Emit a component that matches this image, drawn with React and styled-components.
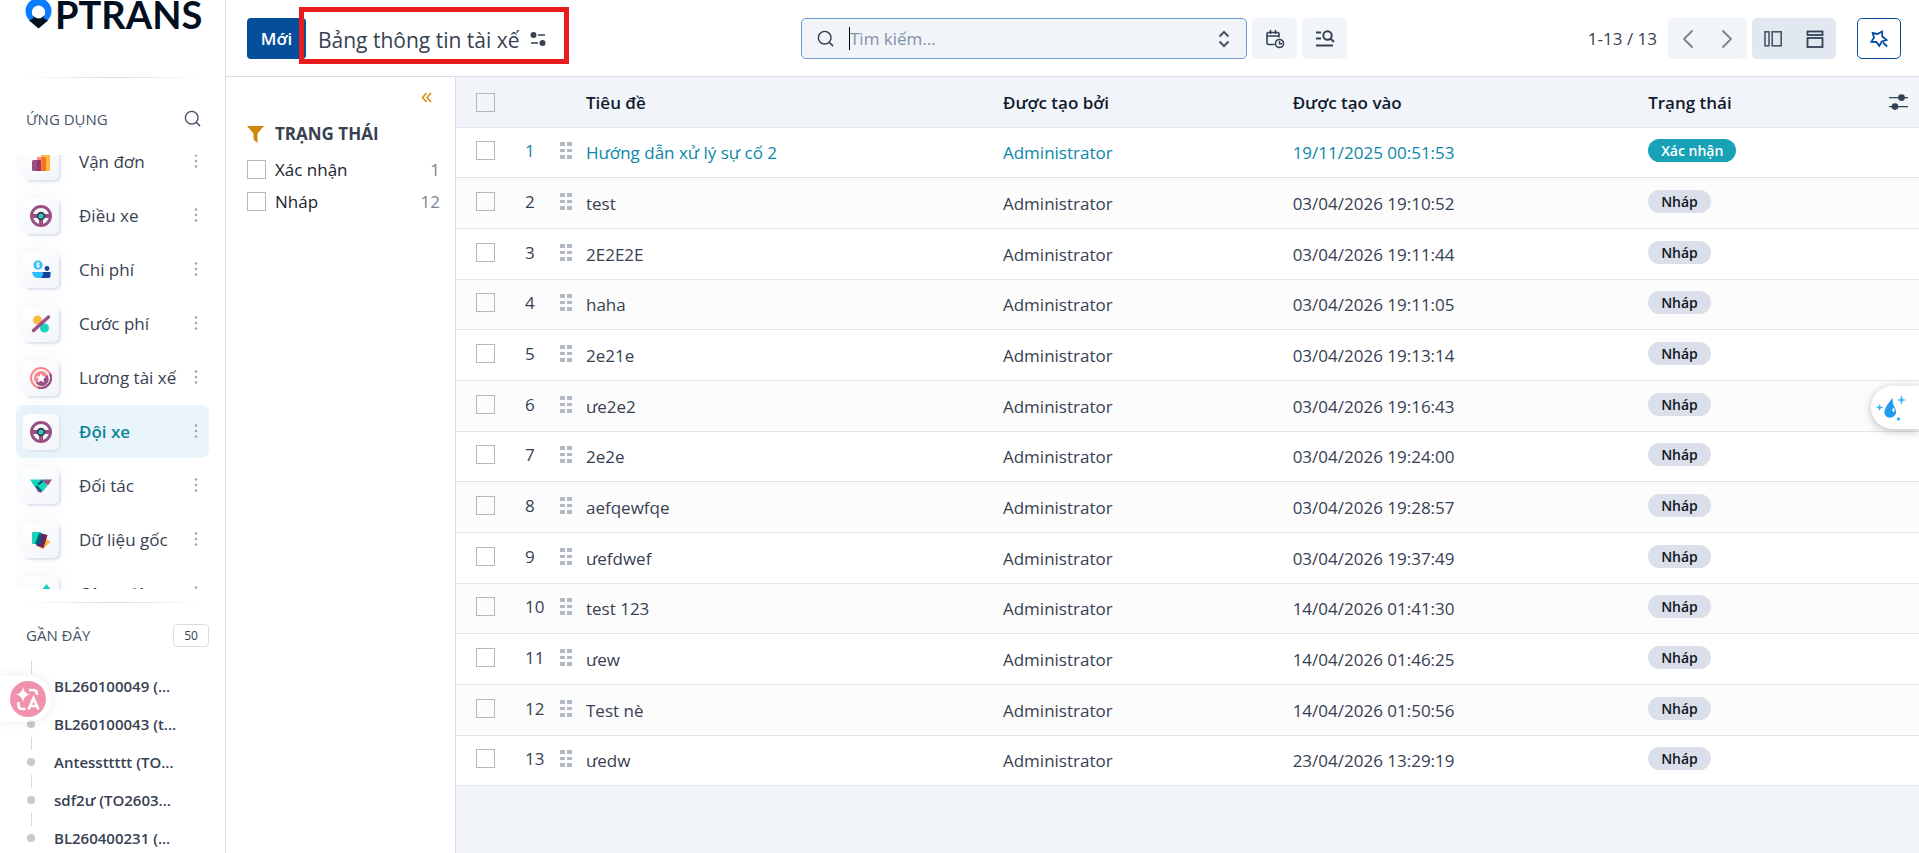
// external dependencies
import React from 'react';
import styled, { createGlobalStyle } from 'styled-components';
import { Search, ChevronLeft, ChevronRight } from 'lucide-react';

const GlobalStyle = createGlobalStyle`
    * { box-sizing: border-box; }
    body {
        margin: 0;
        overflow: hidden;
        font-family: 'Open Sans', 'Noto Sans', sans-serif;
        font-size: 17px;
        color: #374151;
        background: #fff;
    }
    button, input { font: inherit; color: inherit; }
    ul { list-style: none; margin: 0; padding: 0; }
    a { color: inherit; text-decoration: none; }
`

// styled components
const Page = styled.div`
    display: flex;
    height: 100vh;
    overflow: hidden;
`

const Sidebar = styled.aside`
    flex: none;
    display: flex;
    flex-direction: column;
    width: 226px;
    padding: 0 16px;
    border-right: 1px solid #d8dde8;
    overflow: hidden;
`

const Logo = styled.a`
    flex: none;
    display: flex;
    align-items: flex-start;
    gap: 2px;
    height: 77px;
    padding-left: 9px;
    font-family: Lato, sans-serif;
    font-size: 38px;
    font-weight: 700;
    line-height: 28px;
    color: #020f1f;
`

const Divider = styled.hr`
    flex: none;
    width: 180px;
    height: 1px;
    margin: 0 auto;
    border: 0;
    background: linear-gradient(to right, transparent, #d9dbdf, transparent);
`

const SectionHead = styled.div`
    flex: none;
    display: flex;
    align-items: center;
    justify-content: space-between;
    height: ${(props) => props.$height};
    padding: ${(props) => props.$top || '0'} 0 0 10px;
`

const SectionTitle = styled.h2`
    margin: 0;
    font-size: 15px;
    font-weight: 500;
    color: #475569;
`

const IconButton = styled.button`
    display: flex;
    align-items: center;
    justify-content: center;
    padding: 0;
    border: 0;
    background: none;
    color: #475569;
    cursor: pointer;
`

const AppSearch = styled(IconButton)`
    margin-right: 7px;
`

const AppViewport = styled.nav`
    flex: none;
    height: 434px;
    margin-bottom: 13px;
    overflow: hidden;
`

const AppList = styled.ul`
    margin-top: -20px;
`

const AppItem = styled.li`
    display: flex;
    align-items: center;
    height: 53px;
    margin-bottom: 1px;
    padding-left: 7px;
    border-radius: 8px;
    background: ${(props) => (props.$active ? '#e9f5fa' : 'transparent')};
    color: ${(props) => (props.$active ? '#0b8599' : '#374151')};
    font-weight: ${(props) => (props.$active ? 600 : 400)};
`

const AppLink = styled.a`
    flex: 1;
    display: flex;
    align-items: center;
    gap: 20px;
    white-space: nowrap;
`

const Tile = styled.span`
    display: flex;
    align-items: center;
    justify-content: center;
    width: 36px;
    height: 36px;
    border-radius: 6px;
    background: linear-gradient(145deg, #fff, #f1f4f9);
    box-shadow: 2px 2px 2px #dfe3ee, -2px -2px 16px rgba(223, 228, 240, 0.4);
`

const More = styled(IconButton)`
    width: 26px;
    height: 24px;
    margin-bottom: 2px;
    color: #9aa1ab;
`

const Count = styled.span`
    width: 36px;
    border: 1px solid #d8dde8;
    border-radius: 4px;
    font-size: 12px;
    font-weight: 500;
    line-height: 21px;
    text-align: center;
`

const RecentList = styled.ul`
    font-size: 15px;
    font-weight: 600;
`

const RecentItem = styled.li`
    position: relative;
    height: 38px;
    padding: 0 38px;
    line-height: 38px;
    white-space: nowrap;

    &::before {
        content: '';
        position: absolute;
        left: 11px;
        top: 15px;
        width: 8px;
        height: 8px;
        border-radius: 50%;
        background: #c5cad1;
    }

    &::after {
        content: '';
        position: absolute;
        left: 15px;
        top: -6px;
        width: 1px;
        height: 13px;
        background: #d5d9df;
    }
`

const Main = styled.main`
    flex: 1;
    display: flex;
    flex-direction: column;
    min-width: 0;
`

const Toolbar = styled.header`
    flex: none;
    display: grid;
    grid-template-columns: minmax(0, 1fr) 546px minmax(0, 1fr);
    align-items: start;
    height: 77px;
    padding: 18px 18px 0 21px;
    border-bottom: 1px solid #d8dde8;
`

const ToolGroup = styled.div`
    position: relative;
    display: flex;
    align-items: center;
    justify-content: ${(props) => (props.$end ? 'flex-end' : 'flex-start')};
    gap: ${(props) => props.$gap || '0'};
    height: 41px;
`

const NewButton = styled.button`
    width: 59px;
    height: 41px;
    padding: 0;
    border: 0;
    border-radius: 4px;
    background: #054e9c;
    color: #fff;
    font-weight: 600;
`

const Title = styled.h1`
    margin: 2px 10px 0 12px;
    font-size: 21px;
    font-weight: 400;
    line-height: 28px;
    white-space: nowrap;
`

const Highlight = styled.div`
    position: absolute;
    left: 52px;
    top: -11px;
    width: 270px;
    height: 57px;
    border: 5px solid #e81c1c;
    pointer-events: none;
`

const SearchBox = styled.div`
    flex: 1;
    display: flex;
    align-items: center;
    height: 41px;
    padding: 0 16px 0 14px;
    border: 1px solid #6c9bcb;
    border-radius: 5px;
    background: #f1f4f9;
    color: #2f3b4c;
`

const SearchInput = styled.input`
    flex: 1;
    min-width: 0;
    padding: 0;
    border: 0;
    outline: 0;
    background: none;

    &::placeholder {
        color: #8292a8;
        opacity: 1;
    }
`

const Caret = styled.span`
    width: 1px;
    height: 23px;
    margin-left: 14px;
    background: #000;
`

const SoftButton = styled(IconButton)`
    width: 45px;
    height: 41px;
    border-radius: 5px;
    background: #f1f4f9;
    color: #334155;
`

const Pager = styled.span`
    margin-right: 11px;
`

const Segment = styled.div`
    display: flex;
    height: 41px;
    margin-right: ${(props) => props.$gap};
    border-radius: 5px;
    background: ${(props) => (props.$dark ? '#e2e8f0' : '#f1f4f9')};
    overflow: hidden;
`

const SegmentButton = styled(IconButton)`
    width: ${(props) => props.$width};
    color: ${(props) => props.$color};

    & + & {
        border-left: ${(props) => (props.$split ? '1px solid #e2e6ed' : '0')};
    }
`

const OutlineButton = styled(IconButton)`
    width: 44px;
    height: 41px;
    border: 1px solid #054e9c;
    border-radius: 5px;
    color: #054e9c;
`

const Content = styled.div`
    flex: 1;
    display: flex;
    min-height: 0;
`

const FilterPanel = styled.section`
    flex: none;
    width: 230px;
    padding: 10px 15px 0 21px;
    border-right: 1px solid #d8dde8;
`

const Collapse = styled(IconButton)`
    height: 20px;
    margin: 0 8px 0 auto;
    color: #d68910;
`

const FilterTitle = styled.h2`
    display: flex;
    align-items: center;
    gap: 11px;
    margin: 15px 0 7px;
    font-size: 17px;
    font-weight: 700;
    line-height: 24px;
`

const FilterRow = styled.label`
    display: flex;
    align-items: center;
    gap: 9px;
    height: 32px;
    color: #1b2432;
`

const FilterCount = styled.span`
    margin-left: auto;
    color: #7b8595;
`

const Checkbox = styled.input.attrs({ type: 'checkbox' })`
    appearance: none;
    display: block;
    flex: none;
    width: 19px;
    height: 19px;
    margin: 0;
    border: 1px solid #b4b8be;
    background: transparent;
`

const TableArea = styled.section`
    flex: 1;
    min-width: 0;
    background: #f1f4f9;
`

const Table = styled.table`
    width: 100%;
    table-layout: fixed;
    border-collapse: separate;
    border-spacing: 0;
`

const HeadCell = styled.th`
    height: 51px;
    padding: 0 0 0 ${(props) => props.$left || '0'};
    border-bottom: 1px solid #e2e6ee;
    color: #111b2e;
    font-weight: 600;
    text-align: left;
`

const Row = styled.tr`
    height: 51px;
    background: #fff;
    color: ${(props) => (props.$confirmed ? '#0c87a8' : '#374151')};

    &:nth-child(even) { background: #fcfcfc; }
    &:nth-child(3n + 1) { height: 50px; }
`

const Cell = styled.td`
    padding: 0 0 0 ${(props) => props.$left || '0'};
    border-bottom: 1px solid #e2e6ee;
    white-space: nowrap;
`

// controls sit slightly above the text line
const ControlCell = styled(Cell)`
    padding-bottom: 4px;

    svg { display: block; }
`

const Badge = styled.span`
    display: block;
    width: fit-content;
    padding: 0 13px;
    border-radius: 12px;
    background: ${(props) => (props.$confirmed ? '#17a2b8' : '#dadfea')};
    color: ${(props) => (props.$confirmed ? '#fff' : '#10151d')};
    font-size: 14px;
    font-weight: 600;
    line-height: 23px;
`

const Translate = styled.button`
    position: absolute;
    left: 0;
    top: 676px;
    display: flex;
    align-items: center;
    width: 51px;
    height: 46px;
    padding: 0 0 0 10px;
    border: 0;
    border-radius: 0 23px 23px 0;
    background: rgba(255, 255, 255, 0.7);
    box-shadow: 0 0 12px rgba(0, 0, 0, 0.08);
`

const Assistant = styled.button`
    position: absolute;
    right: 0;
    top: 386px;
    display: flex;
    align-items: center;
    width: 48px;
    height: 43px;
    padding: 0 0 0 4px;
    border: 0;
    border-radius: 22px 0 0 22px;
    background: #fff;
    box-shadow: 0 2px 10px rgba(0, 0, 0, 0.25);
`

// icons
const LogoPin = () => (
    <svg width="28" height="29" viewBox="0 0 28 29" aria-hidden="true">
        <path d="M4 20.500L13.500 28.500L23 20.500L18 15H9z" fill="#020f1f" />
        <path d="M4.500 20.500A13 13 0 1 1 22.500 20.500L18 17.500A6.500 6.500 0 1 0 9 17.500z" fill="#0a7cff" />
        <circle cx="13.500" cy="12" r="6.500" fill="#fff" />
    </svg>
)

const Wheel = () => (
    <svg width="22" height="22" viewBox="0 0 22 22">
        <circle cx="11" cy="11" r="9.500" fill="none" stroke="#985184" strokeWidth="3" />
        <path d="M2 11h18M11 11v9" stroke="#985184" strokeWidth="4" />
        <circle cx="11" cy="11" r="3.400" fill="#1ad3bb" stroke="#4b2a4f" strokeWidth="1.600" />
    </svg>
)

const appIcons = {
    bars: (
        <svg width="22" height="22" viewBox="0 0 22 22">
            <rect x="11" y="2" width="9" height="18" rx="1.500" fill="#fbb945" />
            <rect x="7" y="6" width="9" height="14" rx="1.500" fill="#fc6d1c" />
            <path d="M7 7.500Q7 6 8.500 6H11.500V20H7z" fill="#fc868b" />
            <rect x="2" y="9" width="9" height="11" rx="1.500" fill="#985184" />
            <path d="M7 9H9.500Q11 9 11 10.500V20H7z" fill="#953a5c" />
        </svg>
    ),
    wheel: <Wheel />,
    cost: (
        <svg width="22" height="22" viewBox="0 0 22 22">
            <circle cx="8" cy="6" r="4.500" fill="#2ebcfa" />
            <path d="M9.700 4.500Q8 3 6.700 4.300T8 6T9.300 7.600T6.300 7.500M8 3V9" fill="none" stroke="#fff" strokeWidth="1" />
            <circle cx="17" cy="9.500" r="2.400" fill="#144496" />
            <path d="M2 13H14V19H8Q3 19 2 13z" fill="#2ebcfa" />
            <path d="M15 13H20.500V17Q20.500 19 18.500 19H11Q13.500 17.500 13 13z" fill="#144496" />
        </svg>
    ),
    percent: (
        <svg width="22" height="22" viewBox="0 0 22 22">
            <circle cx="7.500" cy="7" r="4.500" fill="#fbb945" />
            <circle cx="14.500" cy="15" r="4.500" fill="#1ad3bb" />
            <path d="M3.500 17.500L18.500 4" stroke="#985184" strokeWidth="3.400" strokeLinecap="round" />
        </svg>
    ),
    star: (
        <svg width="22" height="22" viewBox="0 0 22 22">
            <circle cx="11" cy="11" r="10" fill="none" stroke="#fc868b" strokeWidth="2" />
            <path d="M20 6.500A10 10 0 0 1 8 20.500" fill="none" stroke="#985184" strokeWidth="2" />
            <circle cx="11" cy="11" r="7" fill="#fc868b" />
            <path d="M17.500 8A7 7 0 0 1 6 16z" fill="#985184" />
            <path d="M11 6L12.500 9.300L16 9.700L13.400 12L14.100 15.500L11 13.800L7.900 15.500L8.600 12L6 9.700L9.500 9.300z" fill="#fff" />
        </svg>
    ),
    partner: (
        <svg width="22" height="22" viewBox="0 0 22 22">
            <path d="M0 4.500H12L17 11L12 17L4 11z" fill="#1ad3bb" />
            <path d="M12 4.500H22L18 10.500L13 7z" fill="#985184" />
            <path d="M5 11.500L12 18L8 17z" fill="#985184" />
            <path d="M7 9L12 5L17.500 10.500L12 17L5 11z" fill="#1ad3bb" />
            <path d="M7 9L11.500 5L13.500 6.500L9.500 10zM5 11.500L7 10.500L12 15.500L10.500 17z" fill="#005e7a" />
        </svg>
    ),
    cards: (
        <svg width="22" height="22" viewBox="0 0 22 22">
            <path d="M14 8L20.500 13L12.500 20.500L8 17z" fill="#fbb945" />
            <path d="M10 4L17.500 6L13.500 19L6 16.500z" fill="#6f1d5d" />
            <path d="M2 4Q2 3 3 3H10.500L11.500 4L9 15H3Q2 15 2 14z" fill="#1ad3bb" />
            <path d="M9 4.500L11.500 4.300L11 15.500L5 15z" fill="#005e7a" />
        </svg>
    ),
    diamond: (
        <svg width="22" height="22" viewBox="0 0 22 22">
            <path d="M16.500 1L22 8H11z" fill="#1ad3bb" />
        </svg>
    ),
}

const Dots = () => (
    <svg width="4" height="14" viewBox="0 0 4 14" fill="currentColor">
        <circle cx="2" cy="1.500" r="1.200" />
        <circle cx="2" cy="7" r="1.200" />
        <circle cx="2" cy="12.500" r="1.200" />
    </svg>
)

const TitleSettings = () => (
    <svg width="16" height="16" viewBox="0 0 16 16" fill="#374151">
        <circle cx="3.500" cy="4" r="3" />
        <path d="M8 3.200H15V4.800H8zM1 11.200H8V12.800H1z" />
        <circle cx="12.500" cy="12" r="3" />
    </svg>
)

const UpDown = () => (
    <svg width="12" height="18" viewBox="0 0 12 18" fill="none" stroke="currentColor" strokeWidth="2">
        <path d="M1.500 6.500L6 2L10.500 6.500M1.500 11.500L6 16L10.500 11.500" />
    </svg>
)

const CalendarClock = () => (
    <svg width="20" height="20" viewBox="0 0 20 20" fill="none" stroke="currentColor" strokeWidth="1.600">
        <path d="M9.500 15.500H3.500Q2 15.500 2 14V5Q2 3.500 3.500 3.500H12.500Q14 3.500 14 5V8.500M2 7H14M5.500 1V5M10.500 1V5" />
        <circle cx="14.500" cy="14.500" r="4" />
        <path d="M14.500 12V14.700H17" strokeWidth="1.400" />
    </svg>
)

const ListSearch = () => (
    <svg width="20" height="20" viewBox="0 0 20 20" fill="none" stroke="currentColor" strokeWidth="2">
        <path d="M1 3.500H6M1 9.500H6M1 16.500H18" />
        <circle cx="12.500" cy="6.500" r="4.200" />
        <path d="M15.500 9.500L19 13" />
    </svg>
)

const SplitColumns = () => (
    <svg width="18" height="18" viewBox="0 0 18 18" fill="none" stroke="currentColor" strokeWidth="1.600">
        <rect x="1" y="1.800" width="4" height="14" />
        <rect x="8.200" y="1.800" width="9" height="14" />
    </svg>
)

const SplitRows = () => (
    <svg width="18" height="18" viewBox="0 0 18 18" fill="none" stroke="currentColor" strokeWidth="1.800">
        <rect x="1.500" y="1.500" width="15" height="3.500" />
        <rect x="1.500" y="8" width="15" height="9" />
    </svg>
)

const MagicStar = () => (
    <svg width="18" height="18" viewBox="0 0 18 18" fill="none" stroke="currentColor" strokeWidth="1.800">
        <path d="M12 1.500L12.300 6.500L16.500 10L11.800 11.500L9.300 15.800L6.300 12L1.500 11.800L4 7.500L2.700 3L7.500 4z" />
        <path d="M13 12.500L17.200 16.700" />
    </svg>
)

const Funnel = () => (
    <svg width="17" height="17" viewBox="0 0 17 17" fill="#cf870e">
        <path d="M0 0H17L10.500 7.500V17L6.500 13.500V7.500z" />
    </svg>
)

const DoubleLeft = () => (
    <svg width="11" height="11" viewBox="0 0 11 11" fill="none" stroke="currentColor" strokeWidth="1.500">
        <path d="M5.500 1L1.500 5.500L5.500 10M10 1L6 5.500L10 10" />
    </svg>
)

const Handle = () => (
    <svg width="12" height="17" viewBox="0 0 12 17" fill="#b3b9c3">
        <path d="M0 0h5v4h-5zM7 0h5v4h-5zM0 7h5v3h-5zM7 7h5v3h-5zM0 13h5v4h-5zM7 13h5v4h-5z" />
    </svg>
)

const Sliders = () => (
    <svg width="19" height="16" viewBox="0 0 19 16" fill="#334155">
        <path d="M0 3h19v1.300h-19zM0 12h19v1.300h-19z" />
        <circle cx="12.500" cy="3.600" r="3.400" />
        <circle cx="6" cy="12.600" r="3.300" />
    </svg>
)

const TranslateIcon = () => (
    <svg width="36" height="36" viewBox="0 0 36 36" fill="none">
        <circle cx="18" cy="18" r="18" fill="#ee7f9d" fillOpacity="0.85" />
        <path d="M13 6Q14 12.500 20 13.500Q14 14.500 13 21Q12 14.500 6 13.500Q12 12.500 13 6z" fill="#fff" />
        <path d="M19 9H23Q27 9 27 13V14M8.500 21V24Q8.500 28 12.500 28H15.500M18.500 28.500L23.500 17L28.500 28.500M20.500 25H26.500" stroke="#fff" strokeWidth="2.600" />
    </svg>
)

const Droplet = () => (
    <svg width="32" height="28" viewBox="0 0 32 28" fill="#1f9cf0">
        <path d="M17.500 4Q15 7 11.500 12Q7 20 12 23Q17 25.500 20.500 20.500Q22 17 19 12Q17.500 9 17.500 4z" />
        <path d="M4.500 10L5.500 12.500L8.500 13.500L5.500 14.500L4.500 17L3.500 14.500L1 13.500L3.500 12.500zM26.500 1L27.700 5L31 6L27.700 7L26.500 11L25.300 7L22 6L25.300 5z" fill="#35b3f5" />
        <circle cx="23.500" cy="25" r="1.700" fill="#35b3f5" />
        <ellipse cx="18.500" cy="16" rx="1.200" ry="2" fill="#fff" />
    </svg>
)

// data
const apps = [
    { name: 'Vận đơn', icon: 'bars' },
    { name: 'Điều xe', icon: 'wheel' },
    { name: 'Chi phí', icon: 'cost' },
    { name: 'Cước phí', icon: 'percent' },
    { name: 'Lương tài xế', icon: 'star' },
    { name: 'Đội xe', icon: 'wheel', active: true },
    { name: 'Đối tác', icon: 'partner' },
    { name: 'Dữ liệu gốc', icon: 'cards' },
    { name: 'Công việc', icon: 'diamond' },
]

const recents = [
    'BL260100049 (...',
    'BL260100043 (t...',
    'Antessttttt (TO...',
    'sdf2ư (TO2603...',
    'BL260400231 (...',
]

const filters = [
    { id: 'confirmed', name: 'Xác nhận', count: 1 },
    { id: 'draft', name: 'Nháp', count: 12 },
]

const records = [
    { title: 'Hướng dẫn xử lý sự cố 2', date: '19/11/2025 00:51:53', confirmed: true },
    { title: 'test', date: '03/04/2026 19:10:52' },
    { title: '2E2E2E', date: '03/04/2026 19:11:44' },
    { title: 'haha', date: '03/04/2026 19:11:05' },
    { title: '2e21e', date: '03/04/2026 19:13:14' },
    { title: 'ưe2e2', date: '03/04/2026 19:16:43' },
    { title: '2e2e', date: '03/04/2026 19:24:00' },
    { title: 'aefqewfqe', date: '03/04/2026 19:28:57' },
    { title: 'ưefdwef', date: '03/04/2026 19:37:49' },
    { title: 'test 123', date: '14/04/2026 01:41:30' },
    { title: 'ưew', date: '14/04/2026 01:46:25' },
    { title: 'Test nè', date: '14/04/2026 01:50:56' },
    { title: 'ưedw', date: '23/04/2026 13:29:19' },
]

// component definition
const AppSidebar = () => (
    <Sidebar>
        <Logo href="#" aria-label="OPTRANS">
            <LogoPin />
            PTRANS
        </Logo>
        <Divider />
        <SectionHead $height="77px" $top="4px">
            <SectionTitle>ỨNG DỤNG</SectionTitle>
            <AppSearch aria-label="Tìm ứng dụng"><Search size={19} strokeWidth={1.8} /></AppSearch>
        </SectionHead>
        <AppViewport>
            <AppList>
                {apps.map((app) => (
                    <AppItem key={app.name} $active={app.active}>
                        <AppLink href="#">
                            <Tile>{appIcons[app.icon]}</Tile>
                            {app.name}
                        </AppLink>
                        <More aria-label="Thêm"><Dots /></More>
                    </AppItem>
                ))}
            </AppList>
        </AppViewport>
        <Divider />
        <SectionHead $height="64px">
            <SectionTitle>GẦN ĐÂY</SectionTitle>
            <Count>50</Count>
        </SectionHead>
        <RecentList>
            {recents.map((name) => (
                <RecentItem key={name}><a href="#">{name}</a></RecentItem>
            ))}
        </RecentList>
    </Sidebar>
)

const TopBar = () => (
    <Toolbar>
        <ToolGroup>
            <NewButton>Mới</NewButton>
            <Title>Bảng thông tin tài xế</Title>
            <IconButton aria-label="Cài đặt"><TitleSettings /></IconButton>
            <Highlight />
        </ToolGroup>
        <ToolGroup $gap="5px">
            <SearchBox>
                <Search size={19} strokeWidth={1.8} />
                <Caret />
                <SearchInput type="text" placeholder="Tìm kiếm..." aria-label="Tìm kiếm" />
                <IconButton aria-label="Mở bộ lọc"><UpDown /></IconButton>
            </SearchBox>
            <SoftButton aria-label="Lịch"><CalendarClock /></SoftButton>
            <SoftButton aria-label="Tìm nâng cao"><ListSearch /></SoftButton>
        </ToolGroup>
        <ToolGroup $end>
            <Pager>1-13 / 13</Pager>
            <Segment $gap="5px">
                <SegmentButton $width="39px" $color="#7f848c" $split aria-label="Trang trước"><ChevronLeft size={32} strokeWidth={1.4} /></SegmentButton>
                <SegmentButton $width="40px" $color="#7f848c" $split aria-label="Trang sau"><ChevronRight size={32} strokeWidth={1.4} /></SegmentButton>
            </Segment>
            <Segment $gap="21px" $dark>
                <SegmentButton $width="42px" $color="#475569" aria-label="Chia cột"><SplitColumns /></SegmentButton>
                <SegmentButton $width="42px" $color="#334155" aria-label="Chia hàng"><SplitRows /></SegmentButton>
            </Segment>
            <OutlineButton aria-label="Trợ lý"><MagicStar /></OutlineButton>
        </ToolGroup>
    </Toolbar>
)

const Filters = () => (
    <FilterPanel>
        <Collapse aria-label="Thu gọn"><DoubleLeft /></Collapse>
        <FilterTitle><Funnel />TRẠNG THÁI</FilterTitle>
        {filters.map((filter) => (
            <FilterRow key={filter.id} htmlFor={filter.id}>
                <Checkbox id={filter.id} />
                {filter.name}
                <FilterCount>{filter.count}</FilterCount>
            </FilterRow>
        ))}
    </FilterPanel>
)

const Records = () => (
    <TableArea>
        <Table>
            <colgroup>
                <col width="69" />
                <col width="35" />
                <col width="26" />
                <col width="28.5%" />
                <col width="19.8%" />
                <col width="24.3%" />
                <col />
                <col width="30" />
            </colgroup>
            <thead>
                <tr>
                    <HeadCell $left="20px"><Checkbox aria-label="Chọn tất cả" /></HeadCell>
                    <HeadCell />
                    <HeadCell />
                    <HeadCell>Tiêu đề</HeadCell>
                    <HeadCell>Được tạo bởi</HeadCell>
                    <HeadCell>Được tạo vào</HeadCell>
                    <HeadCell>Trạng thái</HeadCell>
                    <HeadCell><IconButton aria-label="Cột"><Sliders /></IconButton></HeadCell>
                </tr>
            </thead>
            <tbody>
                {records.map((record, index) => (
                    <Row key={record.date} $confirmed={record.confirmed}>
                        <ControlCell $left="20px"><Checkbox aria-label={`Chọn ${record.title}`} /></ControlCell>
                        <ControlCell>{index + 1}</ControlCell>
                        <ControlCell><Handle /></ControlCell>
                        <Cell>{record.title}</Cell>
                        <Cell>Administrator</Cell>
                        <Cell>{record.date}</Cell>
                        <ControlCell>
                            <Badge $confirmed={record.confirmed}>{record.confirmed ? 'Xác nhận' : 'Nháp'}</Badge>
                        </ControlCell>
                        <Cell />
                    </Row>
                ))}
            </tbody>
        </Table>
    </TableArea>
)

const App = () => {

    return (
        <Page>
            <GlobalStyle />
            <AppSidebar />
            <Main>
                <TopBar />
                <Content>
                    <Filters />
                    <Records />
                </Content>
            </Main>
            <Translate aria-label="Dịch"><TranslateIcon /></Translate>
            <Assistant aria-label="Trợ lý AI"><Droplet /></Assistant>
        </Page>
    )
}

export default App;
